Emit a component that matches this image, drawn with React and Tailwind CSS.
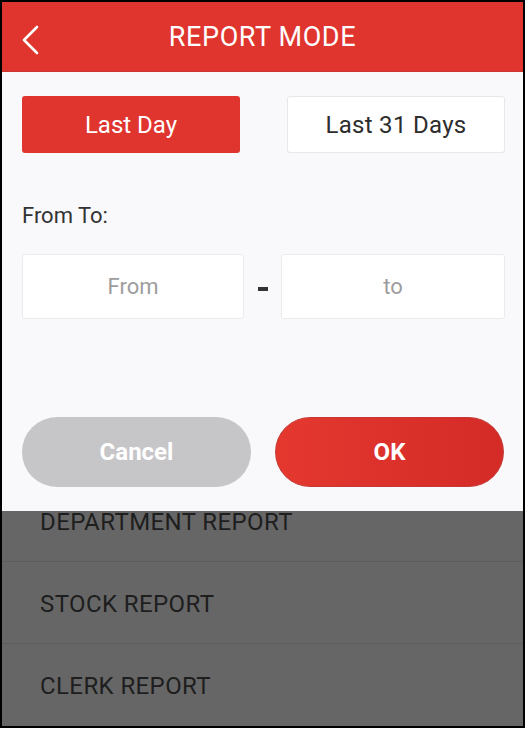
export default function App() {
  const rows = ["STOCK REPORT", "CLERK REPORT"];

  return (
    <div className="w-[529px] h-[729px] bg-white" style={{ fontFamily: "Roboto, 'Liberation Sans', sans-serif" }}>
      <div className="w-[525px] h-[728px] border-2 border-black flex flex-col overflow-hidden">
        {/* header */}
        <div className="h-[70px] shrink-0 bg-[#e0352f] border-b border-[#c93530] relative flex items-center justify-center">
          <svg className="absolute left-[18px] top-[23px]" width="22" height="30" viewBox="0 0 22 30">
            <polyline points="17,2 4,15 17,28" fill="none" stroke="white" strokeWidth="2.6" strokeLinecap="round" strokeLinejoin="round" />
          </svg>
          <h1 className="text-white text-[27px] leading-none tracking-[0.6px] mt-[2px]">REPORT MODE</h1>
        </div>

        {/* dialog body */}
        <div className="h-[439px] shrink-0 bg-[#f9f8fb] pl-[20px] pr-[18px] pt-[24px]">
          <div className="flex justify-between">
            <button className="w-[218px] h-[57px] rounded-[3px] bg-[#e0352f] text-white text-[24px]">Last Day</button>
            <button className="w-[218px] h-[57px] rounded-[3px] bg-white border border-[#e8e7ea] text-[#2d2d2d] text-[24px] tracking-[0.3px]">Last 31 Days</button>
          </div>

          <p className="mt-[50px] text-[22px] leading-[26px] text-[#333]">From To:</p>

          <div className="mt-[25px] flex items-center">
            <div className="w-[222px] h-[65px] bg-white border border-[#ebeaed] rounded-[3px] flex items-center justify-center text-[22px] text-[#9d9d9d]">From</div>
            <div className="flex-1 flex justify-center">
              <span className="block w-[10px] h-[4px] bg-[#333] mt-[4px]"></span>
            </div>
            <div className="w-[224px] h-[65px] bg-white border border-[#ebeaed] rounded-[3px] flex items-center justify-center text-[22px] text-[#9d9d9d]">to</div>
          </div>

          <div className="mt-[98px] flex justify-between pr-[1px]">
            <button className="w-[229px] h-[70px] rounded-full bg-[#c6c5c8] text-white text-[24px] font-bold">Cancel</button>
            <button className="w-[229px] h-[70px] rounded-full bg-gradient-to-r from-[#e4382f] to-[#d42b27] border border-[#c53a36] text-white text-[24px] font-bold">OK</button>
          </div>
        </div>

        {/* dimmed list behind */}
        <div className="flex-1 bg-[#666666] text-[#1e1e1e] text-[24px] tracking-[0.4px]">
          <div className="h-[51px] flex items-end pb-[25px] pl-[38px] leading-[28px] border-b border-[#5c5c5c]">
            DEPARTMENT REPORT
          </div>
          {rows.map((r, i) => (
            <div
              key={r}
              className={`h-[82px] flex items-center pl-[38px] pt-[2px] ${i === 0 ? "border-b border-[#5c5c5c]" : ""}`}
            >
              {r}
            </div>
          ))}
        </div>
      </div>
    </div>
  );
}
